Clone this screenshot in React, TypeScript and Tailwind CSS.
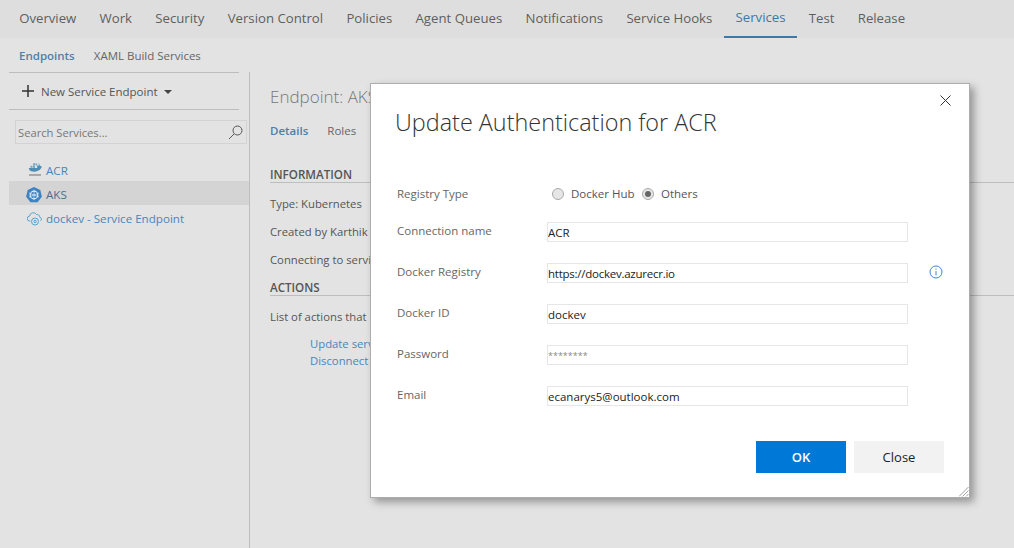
import React from "react";

const tabs = ["Overview","Work","Security","Version Control","Policies","Agent Queues","Notifications","Service Hooks","Services","Test","Release"];

function Docker() {
  return (
    <svg width="14" height="15" viewBox="0 0 14 15" className="shrink-0">
      <path d="M.8 6h8.400V3.500h1.600V.8l1 3c.8 0 1.500.3 2 .9-.7 1.700-1.700 3-3.300 3.900-1.800 1.200-3.700 1.300-5.400.9C2.600 9.800 1.100 8.200.8 6z" fill="#4f8db5" />
      <rect x="2.500" y="3.800" width="2" height="2" fill="#6fa3c4" />
      <rect x="5" y="3.800" width="2" height="2" fill="#6fa3c4" />
      <rect x="5" y="1.400" width="2" height="2" fill="#6fa3c4" />
      <rect x="7.500" y="1.400" width="1.600" height="2" fill="#6fa3c4" />
      <rect x="1" y="12" width="12" height="2" fill="#a8a8a8" />
    </svg>
  );
}

function Kube() {
  return (
    <svg width="16" height="16" viewBox="0 0 16 16" className="shrink-0">
      <path d="M8 0l6.300 3 1.600 6.800-4.400 5.500h-7L.1 9.800 1.700 3z" fill="#3d83c2" />
      <circle cx="8" cy="8" r="3.800" fill="none" stroke="#dfeaf5" strokeWidth="1.200" />
      <path d="M8 2.800v10.400M3 6l10 4M3 10l10-4" stroke="#dfeaf5" strokeWidth=".7" />
    </svg>
  );
}

function CloudIcon() {
  return (
    <svg width="15" height="15" viewBox="0 0 15 15" fill="none" stroke="#5aa2cf" strokeWidth="1" className="shrink-0">
      <path d="M3.500 10H2.800a2.400 2.400 0 0 1-.3-4.800A3.800 3.800 0 0 1 9.500 3.500a2.800 2.800 0 0 1 3.300 2.800 1.900 1.900 0 0 1 .7 3.500" />
      <circle cx="8" cy="10.500" r="3.500" />
      <circle cx="8" cy="10.500" r="1.200" />
    </svg>
  );
}

function Field({ label, value, inputClass, info }: { label: string; value: string; inputClass?: string; info?: boolean }) {
  return (
    <div className="flex items-center h-[22px] mb-[19px]">
      <div className="w-[150px] text-[11.500px] text-[#666666] -mt-[2px]">{label}</div>
      <input
        readOnly
        value={value}
        className={`w-[361px] h-[20px] box-border border border-[#e6e6e6] px-0 bg-white outline-none ${inputClass ?? "text-[11.500px] text-[#222222]"}`}
      />
      {info && (
        <svg width="14" height="14" viewBox="0 0 14 14" fill="none" className="ml-[21px] -mt-[2px] shrink-0">
          <circle cx="7" cy="7" r="6" stroke="#3b86d8" />
          <path d="M7 6v4.500M7 3.500v1.200" stroke="#3b86d8" />
        </svg>
      )}
    </div>
  );
}

export default function App() {
  return (
    <div className="relative w-[1014px] h-[548px] overflow-hidden bg-[#e3e3e3] font-['Open_Sans',sans-serif] text-[11.300px] text-[#555555]">
      <nav className="flex h-[38px] bg-[#dedede] pl-[7.500px]">
        {tabs.map((t) => (
          <div
            key={t}
            className={`flex items-center px-[11.650px] text-[13.200px] ${t === "Services" ? "h-[38px] border-b-2 border-[#3d78ac] text-[#3d78ac]" : "text-[#5f5f5f]"}`}
          >
            {t}
          </div>
        ))}
      </nav>
      <div className="flex items-center h-[34px] pt-[2px] pl-[19px] gap-[19px] text-[11.500px]">
        <span className="font-semibold text-[#4f7fa8]">Endpoints</span>
        <span className="text-[#666666]">XAML Build Services</span>
      </div>
      <div className="flex h-[476px]">
        <aside className="w-[250px] pl-[9px] border-r border-[#bdbdbd] shrink-0">
          <div className="w-[230px] h-[38px] border-y border-[#bdbdbd] flex items-center pl-[12px] gap-[6px] text-[11.500px] text-[#555555]">
            <svg width="14" height="14" viewBox="0 0 14 14"><path d="M7 1v12M1 7h12" stroke="#333333" strokeWidth="1.500" /></svg>
            <span className="pt-[2px]">New Service Endpoint</span>
            <span className="w-0 h-0 mt-[1px] border-x-[4px] border-x-transparent border-t-[4px] border-t-[#444444]" />
          </div>
          <div className="mt-[10px] ml-[6px] w-[232px] h-[24px] border border-[#d3d3d3] flex items-center justify-between pl-[2px] pr-[2px] text-[11.200px] text-[#777777]">
            <span className="pt-[3px]">Search Services...</span>
            <svg width="16" height="16" viewBox="0 0 16 16" fill="none" stroke="#555555"><circle cx="9.500" cy="6.500" r="4.500" /><path d="M6 10l-5 5" /></svg>
          </div>
          <div className="mt-[13px] text-[11.600px]">
            <div className="flex h-[24px] pl-[19px] text-[#4a86b8] items-center"><Docker /><span className="ml-[4px] pt-[4px]">ACR</span></div>
            <div className="flex h-[24px] pl-[17px] bg-[#d4d4d4] text-[#4a6f8f] items-center"><span className="pt-[3px]"><Kube /></span><span className="ml-[4px] pt-[4px]">AKS</span></div>
            <div className="flex h-[24px] pl-[18px] text-[#4a86b8] items-center"><span className="pt-[3px]"><CloudIcon /></span><span className="ml-[4px] pt-[4px]">dockev - Service Endpoint</span></div>
          </div>
        </aside>
        <main className="flex-1 pl-[20px] pt-[12px]">
          <h1 className="text-[17px] font-light leading-[26px] text-[#777777]">Endpoint: AKS</h1>
          <div className="flex gap-[19px] mt-[11px] text-[11.500px] leading-[20px]">
            <span className="font-semibold text-[#4f7fa8]">Details</span>
            <span className="text-[#666666]">Roles</span>
          </div>
          <div className="mt-[26px] h-[16px] border-b border-[#bdbdbd] text-[11.600px] font-semibold leading-[16px] text-[#555555]">INFORMATION</div>
          <p className="mt-[13px] leading-[16px]">Type: Kubernetes</p>
          <p className="mt-[12px] leading-[16px]">Created by Karthik</p>
          <p className="mt-[12px] leading-[16px]">Connecting to service</p>
          <div className="mt-[12px] h-[16px] border-b border-[#bdbdbd] text-[11.600px] font-semibold leading-[16px]">ACTIONS</div>
          <p className="mt-[13px] leading-[16px]">List of actions that</p>
          <div className="mt-[10px] ml-[40px] leading-[17px] text-[#4a86b8]">
            <div>Update service</div>
            <div>Disconnect</div>
          </div>
        </main>
      </div>

      <div className="absolute left-[370px] top-[83px] w-[600px] h-[415px] box-border bg-white border border-[#adadad] shadow-[4px_4px_8px_rgba(0,0,0,0.35)] pl-[25px]">
        <svg width="11" height="11" viewBox="0 0 11 11" className="absolute right-[18px] top-[11px]" stroke="#333333" fill="none"><path d="M.5.5l10 10M10.500.5l-10 10" /></svg>
        <h2 className="-ml-[1px] pt-[21px] text-[23.400px] font-light leading-[34px] text-[#333333]">Update Authentication for ACR</h2>
        <div className="ml-[1px] mt-[44px] flex items-center h-[22px] mb-[16px] text-[11.500px]">
          <div className="w-[155px] text-[#666666]">Registry Type</div>
          <span className="w-[12px] h-[12px] rounded-full border border-[#aaaaaa] bg-[#e6e6e6]" />
          <span className="ml-[7px] w-[71px] text-[#555555]">Docker Hub</span>
          <span className="w-[12px] h-[12px] rounded-full border border-[#aaaaaa] bg-[#e6e6e6] flex items-center justify-center"><span className="w-[6px] h-[6px] rounded-full bg-[#666666]" /></span>
          <span className="ml-[7px] text-[#555555]">Others</span>
        </div>
        <div className="ml-[1px]">
          <Field label="Connection name" value="ACR" />
          <Field label="Docker Registry" value="https://dockev.azurecr.io" inputClass="text-[11.500px] tracking-[-0.25px] text-[#222222]" info />
          <Field label="Docker ID" value="dockev" />
          <Field label="Password" value="********" inputClass="text-[9px] text-[#888888]" />
          <Field label="Email" value="ecanarys5@outlook.com" />
        </div>
        <div className="flex justify-end gap-[8px] pr-[25px] mt-[34px]">
          <button className="w-[90px] h-[32px] pt-[2px] bg-[#0078d7] text-white text-[13px] font-semibold">OK</button>
          <button className="w-[90px] h-[32px] pt-[2px] bg-[#f2f2f2] text-[#222222] text-[13px] font-medium">Close</button>
        </div>
        <svg width="10" height="10" viewBox="0 0 10 10" className="absolute right-0 bottom-0" stroke="#888888" strokeWidth=".8"><path d="M9.500 0L0 9.500M9.500 3.500L3.500 9.500M9.500 7L7 9.500" /></svg>
      </div>
    </div>
  );
}
